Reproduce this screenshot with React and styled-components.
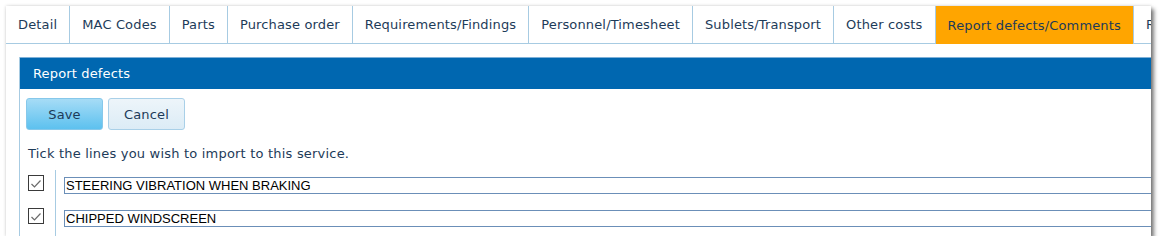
import React, { useState } from 'react';
import styled, { createGlobalStyle } from 'styled-components';

const GlobalStyle = createGlobalStyle`
  body {
    margin: 0;
    background: #ffffff;
    font-family: "DejaVu Sans", Verdana, sans-serif;
  }
`;

const Frame = styled.div`
  margin: 6px 0 0 6px;
  width: 1145px;
  height: 230px;
  overflow: hidden;
  background: #fff;
  box-shadow: 0 0 3px rgba(0, 0, 0, 0.18), 3px 3px 4px rgba(0, 0, 0, 0.5);
`;

const TabBar = styled.div`
  display: flex;
  height: 37px;
  border-bottom: 1px solid #a7cbe2;
  width: 1300px;
`;

const Tab = styled.div`
  display: flex;
  align-items: center;
  padding: 0 12px;
  font-size: 13px;
  letter-spacing: 0.15px;
  color: #1d3b59;
  white-space: nowrap;
  border-right: 1px solid #a7cbe2;
  background: ${(p) => (p.$active ? '#ffa500' : '#fff')};
  margin-bottom: ${(p) => (p.$active ? '-1px' : '0')};
`;

const Content = styled.div`
  padding: 13px 0 0 13px;
`;

const Panel = styled.div`
  width: 1250px;
  border-left: 1px solid #a7cbe2;
`;

const PanelHeader = styled.div`
  height: 31px;
  display: flex;
  align-items: center;
  padding-left: 13px;
  background: #0067b0;
  border-top: 1px solid #7fb1d8;
  color: #fff;
  font-size: 13px;
  letter-spacing: 0.15px;
`;

const PanelBody = styled.div`
  padding: 9px 0 0 6px;
`;

const ButtonRow = styled.div`
  display: flex;
  gap: 5px;
`;

const Button = styled.button`
  width: 77px;
  height: 32px;
  border-radius: 3px;
  font-family: "DejaVu Sans", Verdana, sans-serif;
  font-size: 13px;
  letter-spacing: 0.15px;
  color: #1d3b59;
  cursor: pointer;
  border: 1px solid ${(p) => (p.$primary ? '#86c8ea' : '#a9d0e8')};
  background: ${(p) =>
    p.$primary
      ? 'linear-gradient(#a6dcf6, #5dc1ef)'
      : 'linear-gradient(#edf5fa, #dcecf6)'};
`;

const Hint = styled.p`
  margin: 16px 0 0 2px;
  font-size: 13px;
  letter-spacing: 0.2px;
  line-height: 16px;
  color: #1d3b59;
`;

const Lines = styled.div`
  margin: 8px 0 0 -6px;
`;

const Line = styled.div`
  display: flex;
  height: 33px;
`;

const TickCell = styled.div`
  width: 36px;
  border-right: 1px solid #a7cbe2;
  padding: 5px 0 0 8px;
  box-sizing: border-box;
`;

const Tick = styled.span`
  display: block;
  width: 16px;
  height: 16px;
  box-sizing: border-box;
  border: 1px solid #3a3a3a;
  background: #fff;
  cursor: pointer;
`;

const FieldCell = styled.div`
  flex: 1;
  padding: 7px 0 0 8px;
`;

const Field = styled.input`
  display: block;
  width: 1180px;
  height: 17px;
  box-sizing: border-box;
  border: 1px solid #6b8fb8;
  padding: 0 1px;
  font-family: "Liberation Sans", Arial, sans-serif;
  font-size: 13px;
  color: #000;
  outline: none;
`;

const tabs = [
  'Detail',
  'MAC Codes',
  'Parts',
  'Purchase order',
  'Requirements/Findings',
  'Personnel/Timesheet',
  'Sublets/Transport',
  'Other costs',
  'Report defects/Comments',
  'Remarks',
];

const defects = ['STEERING VIBRATION WHEN BRAKING', 'CHIPPED WINDSCREEN'];

const CheckMark = () => (
  <svg width="14" height="14" viewBox="0 0 14 14">
    <path d="M2.5 7 L5.5 10 L11.5 3.5" fill="none" stroke="#6a6a6a" strokeWidth="1.2" />
  </svg>
);

const App = () => {
  const [ticked, setTicked] = useState(defects.map(() => true));

  const toggle = (i) => setTicked(ticked.map((t, j) => (j === i ? !t : t)));

  return (
    <>
      <GlobalStyle />
      <Frame>
        <TabBar>
          {tabs.map((t) => (
            <Tab key={t} $active={t === 'Report defects/Comments'}>
              {t}
            </Tab>
          ))}
        </TabBar>
        <Content>
          <Panel>
            <PanelHeader>Report defects</PanelHeader>
            <PanelBody>
              <ButtonRow>
                <Button $primary>Save</Button>
                <Button>Cancel</Button>
              </ButtonRow>
              <Hint>Tick the lines you wish to import to this service.</Hint>
              <Lines>
                {defects.map((d, i) => (
                  <Line key={d}>
                    <TickCell>
                      <Tick onClick={() => toggle(i)}>{ticked[i] && <CheckMark />}</Tick>
                    </TickCell>
                    <FieldCell>
                      <Field defaultValue={d} />
                    </FieldCell>
                  </Line>
                ))}
              </Lines>
            </PanelBody>
          </Panel>
        </Content>
      </Frame>
    </>
  );
};

export default App;
